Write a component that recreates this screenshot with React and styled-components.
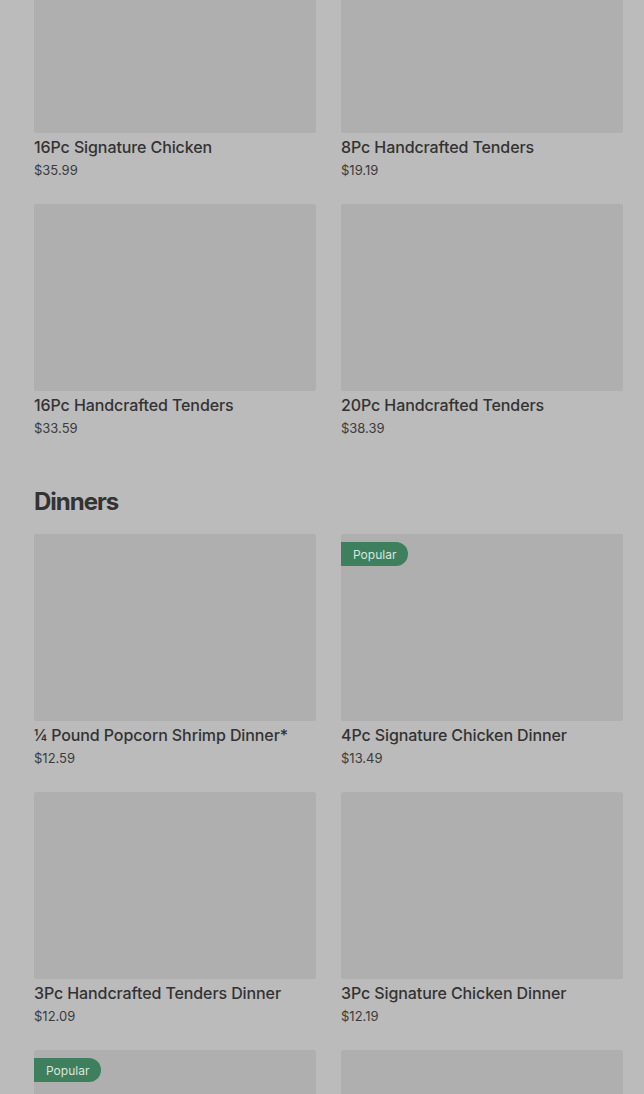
import React from "react";
import styled, { createGlobalStyle } from "styled-components";

const Global = createGlobalStyle`
  html, body { margin: 0; padding: 0; background: #bbbbbb; }
  body { font-family: Inter, "Noto Sans", Arial, sans-serif; color: #333333; overflow: hidden; }
`;

const Page = styled.div`
  padding: 0 21px 0 34px;
  margin-top: -54px;
`;

const Section = styled.section`
  display: flex;
  flex-direction: column;
  & + & { margin-top: 47px; }
`;

const Heading = styled.h2`
  margin: 0 0 16px;
  font-size: 24px;
  line-height: 32px;
  font-weight: 700;
  letter-spacing: -1px;
  color: #333333;
`;

const Grid = styled.div`
  display: grid;
  grid-template-columns: 282px 282px;
  column-gap: 25px;
  row-gap: 23px;
`;

const Card = styled.div`
  display: flex;
  flex-direction: column;
`;

const Thumb = styled.div`
  position: relative;
  height: 187px;
  background: #afafaf;
  border-radius: 2px;
`;

const Badge = styled.span`
  position: absolute;
  left: 0;
  top: 8px;
  height: 24px;
  padding: 0 12px;
  display: flex;
  align-items: center;
  background: #3e7f5d;
  color: #d9e6de;
  font-size: 12px;
  border-radius: 0 12px 12px 0;
`;

const Name = styled.div`
  margin-top: 2px;
  font-size: 16px;
  line-height: 24px;
  font-weight: 500;
  letter-spacing: -0.1px;
  color: #333333;
`;

const Price = styled.div`
  font-size: 13px;
  line-height: 22px;
  color: #3c3c3c;
`;

const sections = [
  {
    items: [
      { name: "16Pc Signature Chicken", price: "$35.99" },
      { name: "8Pc Handcrafted Tenders", price: "$19.19" },
      { name: "16Pc Handcrafted Tenders", price: "$33.59" },
      { name: "20Pc Handcrafted Tenders", price: "$38.39" },
    ],
  },
  {
    title: "Dinners",
    items: [
      { name: "¼ Pound Popcorn Shrimp Dinner*", price: "$12.59" },
      { name: "4Pc Signature Chicken Dinner", price: "$13.49", popular: true },
      { name: "3Pc Handcrafted Tenders Dinner", price: "$12.09" },
      { name: "3Pc Signature Chicken Dinner", price: "$12.19" },
      { popular: true },
      {},
    ],
  },
];

export default function App() {
  return (
    <>
      <Global />
      <Page>
        {sections.map((s, i) => (
          <Section key={i}>
            {s.title && <Heading>{s.title}</Heading>}
            <Grid>
              {s.items.map((it, j) => (
                <Card key={j}>
                  <Thumb>{it.popular && <Badge>Popular</Badge>}</Thumb>
                  {it.name && <Name>{it.name}</Name>}
                  {it.price && <Price>{it.price}</Price>}
                </Card>
              ))}
            </Grid>
          </Section>
        ))}
      </Page>
    </>
  );
}
